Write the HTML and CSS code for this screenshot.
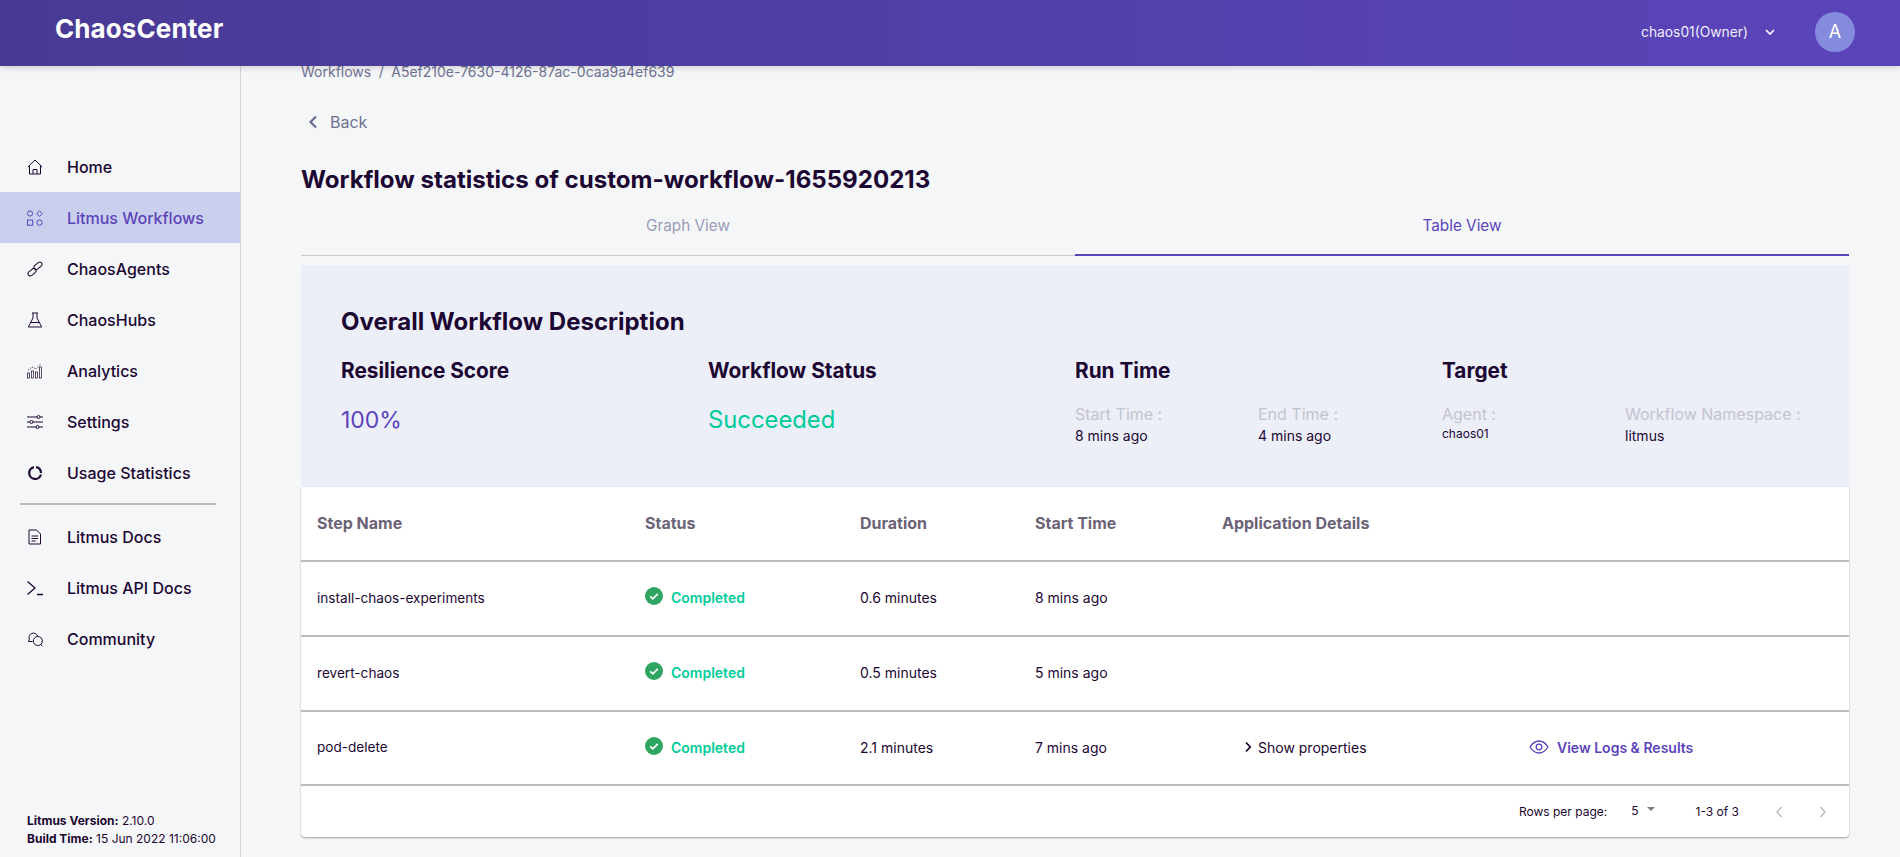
FILE: index.html
```html
<!DOCTYPE html>
<html lang="en">
<head>
    <meta charset="UTF-8">
    <title>ChaosCenter</title>
    <link rel="stylesheet" href="styles.css">
</head>
<body>
    <header class="topbar">
        <div class="brand">ChaosCenter</div>
        <div class="account">
            <span class="account-name">chaos01(Owner)</span>
            <svg class="account-caret" width="12" height="8" viewBox="0 0 12 8"><path d="M2 2l4 4 4-4" fill="none" stroke="#fff" stroke-width="1.6"/></svg>
            <div class="avatar">A</div>
        </div>
    </header>

    <div class="layout">
        <aside class="sidebar">
            <nav class="nav">
                <a class="nav-item">
                    <svg class="nav-icon" viewBox="0 0 16 16"><path d="M0.800 8L8 1l7.200 7M2.500 6.500V15h11V6.500M6 15v-4.500h4V15"/></svg>
                    Home
                </a>
                <a class="nav-item active">
                    <svg class="nav-icon" viewBox="0 0 16 16"><circle cx="3" cy="3.500" r="2.600"/><path d="M12.500 0.800l2.800 2.800-2.800 2.800-2.800-2.800z"/><rect x="0.500" y="10" width="5.200" height="5.200"/><circle cx="12.500" cy="12.600" r="2.700"/></svg>
                    Litmus Workflows
                </a>
                <a class="nav-item">
                    <svg class="nav-icon" viewBox="0 0 16 16"><rect x="6.500" y="2.500" width="9" height="4.600" rx="2.300" transform="rotate(-40 11 4.800)"/><rect x="0.500" y="8.900" width="9" height="4.600" rx="2.300" transform="rotate(-40 5 11.200)"/></svg>
                    ChaosAgents
                </a>
                <a class="nav-item">
                    <svg class="nav-icon" viewBox="0 0 16 16"><path d="M5 1h6M6 1v5L1.300 15h13.400L10 6V1M4 10.500h8M6.500 12.500h.1M9 9.500h.1"/></svg>
                    ChaosHubs
                </a>
                <a class="nav-item">
                    <svg class="nav-icon icon-thin" viewBox="0 0 16 16"><rect x="0.500" y="10" width="2" height="5"/><rect x="4.500" y="8" width="2" height="7"/><rect x="8.500" y="9" width="2" height="6"/><rect x="12.500" y="4" width="2" height="11"/><path d="M1 7l4-3 4 2 4.500-5" stroke-dasharray="1.500 1"/></svg>
                    Analytics
                </a>
                <a class="nav-item">
                    <svg class="nav-icon" viewBox="0 0 16 16"><path d="M0 3h10M13 3h3M0 8h3M6 8h10M0 13h9M12 13h4"/><circle cx="11.500" cy="3" r="1.500"/><circle cx="4.500" cy="8" r="1.500"/><circle cx="10.500" cy="13" r="1.500"/></svg>
                    Settings
                </a>
                <a class="nav-item">
                    <svg class="nav-icon nav-icon-thick" viewBox="0 0 16 16"><path d="M9 2.200A6 6 0 0 1 14 8M14 9.500A6 6 0 1 1 7 2.100"/></svg>
                    Usage Statistics
                </a>
                <div class="nav-divider"></div>
                <a class="nav-item">
                    <svg class="nav-icon" viewBox="0 0 16 16"><path d="M2 1h7.500L13.500 5v10H2zM4.500 7h6.500M4.500 9.500h6.500M4.500 12h4"/></svg>
                    Litmus Docs
                </a>
                <a class="nav-item">
                    <svg class="nav-icon icon-heavy" viewBox="0 0 16 16"><path d="M0.500 1.500L8 8l-7.500 6.500M10 14.500h6"/></svg>
                    Litmus API Docs
                </a>
                <a class="nav-item">
                    <svg class="nav-icon" viewBox="0 0 16 16"><path d="M5.500 10.500H1.500l.8-2.500A4.200 4.200 0 1 1 10.500 5"/><circle cx="10.800" cy="10" r="4.500"/><path d="M13.500 13.500l2 1.500"/></svg>
                    Community
                </a>
            </nav>
            <div class="version">
                <div><b>Litmus Version:</b> 2.10.0</div>
                <div><b>Build Time:</b> 15 Jun 2022 11:06:00</div>
            </div>
        </aside>

        <main class="content">
            <div class="breadcrumb">Workflows<span class="crumb-sep">/</span>A5ef210e-7630-4126-87ac-0caa9a4ef639</div>
            <div class="back">
                <svg width="11" height="16" viewBox="0 0 11 16"><path d="M9 2.500L3.500 8 9 13.500" fill="none" stroke="#6b7094" stroke-width="2.200"/></svg>
                Back
            </div>
            <h1 class="title">Workflow statistics of custom-workflow-1655920213</h1>

            <div class="tabs">
                <div class="tab">Graph View</div>
                <div class="tab selected">Table View</div>
            </div>

            <section class="overview">
                <h2 class="overview-title">Overall Workflow Description</h2>
                <div class="overview-grid">
                    <div class="overview-col">
                        <h3>Resilience Score</h3>
                        <div class="big-value score">100%</div>
                    </div>
                    <div class="overview-col">
                        <h3>Workflow Status</h3>
                        <div class="big-value success">Succeeded</div>
                    </div>
                    <div class="overview-col">
                        <h3>Run Time</h3>
                        <div class="pairs">
                            <div><div class="pair-label">Start Time :</div><div class="pair-value">8 mins ago</div></div>
                            <div><div class="pair-label">End Time :</div><div class="pair-value">4 mins ago</div></div>
                        </div>
                    </div>
                    <div class="overview-col">
                        <h3>Target</h3>
                        <div class="pairs">
                            <div><div class="pair-label">Agent :</div><div class="pair-value small">chaos01</div></div>
                            <div><div class="pair-label">Workflow Namespace :</div><div class="pair-value">litmus</div></div>
                        </div>
                    </div>
                </div>
            </section>

            <section class="table-card">
                <div class="row head">
                    <div>Step Name</div>
                    <div>Status</div>
                    <div>Duration</div>
                    <div>Start Time</div>
                    <div>Application Details</div>
                    <div></div>
                </div>
                <div class="row">
                    <div class="step">install-chaos-experiments</div>
                    <div class="status">
                        <svg width="18" height="18" viewBox="0 0 18 18"><circle cx="9" cy="9" r="9" fill="#2ea561"/><path d="M5.200 9.300l2.600 2.500 5-5" fill="none" stroke="#fff" stroke-width="1.800"/></svg>
                        Completed
                    </div>
                    <div>0.6 minutes</div>
                    <div>8 mins ago</div>
                    <div></div>
                    <div></div>
                </div>
                <div class="row">
                    <div class="step">revert-chaos</div>
                    <div class="status">
                        <svg width="18" height="18" viewBox="0 0 18 18"><circle cx="9" cy="9" r="9" fill="#2ea561"/><path d="M5.200 9.300l2.600 2.500 5-5" fill="none" stroke="#fff" stroke-width="1.800"/></svg>
                        Completed
                    </div>
                    <div>0.5 minutes</div>
                    <div>5 mins ago</div>
                    <div></div>
                    <div></div>
                </div>
                <div class="row last">
                    <div class="step">pod-delete</div>
                    <div class="status">
                        <svg width="18" height="18" viewBox="0 0 18 18"><circle cx="9" cy="9" r="9" fill="#2ea561"/><path d="M5.200 9.300l2.600 2.500 5-5" fill="none" stroke="#fff" stroke-width="1.800"/></svg>
                        Completed
                    </div>
                    <div>2.1 minutes</div>
                    <div>7 mins ago</div>
                    <div class="props">
                        <svg width="8" height="12" viewBox="0 0 8 12"><path d="M2 1.500L6.200 6 2 10.500" fill="none" stroke="#1c0732" stroke-width="1.800"/></svg>
                        Show properties
                    </div>
                    <div class="logs">
                        <svg width="20" height="14" viewBox="0 0 20 14"><path d="M1 7c2.400-3.800 5.400-6 9-6s6.600 2.200 9 6c-2.400 3.800-5.400 6-9 6s-6.600-2.200-9-6z" fill="none" stroke="#5b44ba" stroke-width="1.300"/><circle cx="10" cy="7" r="2.800" fill="none" stroke="#5b44ba" stroke-width="1.300"/></svg>
                        View Logs &amp; Results
                    </div>
                </div>
                <div class="pager">
                    <span class="pager-label">Rows per page:</span>
                    <span class="pager-size">5<i class="pager-caret"></i></span>
                    <span class="pager-count">1-3 of 3</span>
                    <svg width="10" height="14" viewBox="0 0 10 14"><path d="M7.500 2L3 7l4.500 5" fill="none" stroke="#b5b5b9" stroke-width="1.300"/></svg>
                    <svg class="pager-next" width="10" height="14" viewBox="0 0 10 14"><path d="M2.500 2L7 7l-4.500 5" fill="none" stroke="#b5b5b9" stroke-width="1.300"/></svg>
                </div>
            </section>
        </main>
    </div>
</body>
</html>
```

FILE: styles.css
```css
* {
    box-sizing: border-box;
}

html, body {
    height: 100%;
}

body {
    margin: 0;
    font-family: Inter, "Liberation Sans", sans-serif;
    color: #1c0732;
    background-color: #f5f6f8;
    overflow: hidden;
}

.topbar {
    position: relative;
    z-index: 2;
    height: 66px;
    display: flex;
    align-items: center;
    justify-content: space-between;
    padding: 0 45px 0 55px;
    background: linear-gradient(90deg, #483a94, #5b44ba);
    box-shadow: 0 2px 6px rgba(0, 0, 0, 0.15);
}

.brand {
    font-size: 26px;
    font-weight: 700;
    letter-spacing: 0.1px;
    color: #fff;
    margin-top: -10px;
}

.account {
    display: flex;
    align-items: center;
    margin-top: -3px;
}

.account-name {
    font-size: 13.8px;
    color: #f0eefb;
}

.account-caret {
    margin-left: 16px;
}

.avatar {
    width: 40px;
    height: 40px;
    margin-left: 39px;
    border-radius: 50%;
    background-color: #858cdd;
    color: #fff;
    font-size: 18px;
    display: flex;
    align-items: center;
    justify-content: center;
}

.layout {
    display: flex;
    height: 791px;
}

/* Sidebar */
.sidebar {
    width: 241px;
    flex-shrink: 0;
    border-right: 1px solid #d4d5d9;
    display: flex;
    flex-direction: column;
    justify-content: space-between;
    padding: 75px 0 9px;
}

.nav-item {
    height: 51px;
    display: flex;
    align-items: center;
    padding-left: 27px;
    font-size: 16px;
    font-weight: 500;
    color: #1c0732;
}

.nav-item.active {
    background-color: #cbcfee;
    color: #5b44ba;
}

.nav-icon {
    width: 16px;
    height: 16px;
    margin-right: 24px;
    flex-shrink: 0;
    fill: none;
    stroke: #1c0732;
    stroke-width: 1;
}

.nav-icon-thick {
    stroke-width: 2.200;
}

.icon-thin {
    stroke-width: 0.700;
}

.icon-heavy {
    stroke-width: 1.300;
}

.active .nav-icon {
    stroke: #5b44ba;
}

.nav-divider {
    height: 2px;
    margin: 5px 24px 6px 20px;
    background-color: #b9b9bc;
}

.version {
    padding-left: 27px;
    font-size: 12px;
    line-height: 18px;
}

/* Main */
.content {
    flex: 1;
    padding: 0 51px 0 60px;
    min-width: 0;
}

.breadcrumb {
    font-size: 14px;
    line-height: 18px;
    margin-top: -3px;
    color: #6e7191;
}

.crumb-sep {
    margin: 0 7.500px;
}

.back {
    display: flex;
    align-items: center;
    gap: 12px;
    margin: 31px 0 0 6px;
    font-size: 16px;
    line-height: 20px;
    color: #6e7191;
}

.title {
    margin: 32px 0 0;
    font-size: 24.100px;
    line-height: 32px;
    font-weight: 700;
}

.tabs {
    display: flex;
    margin-top: 3px;
}

.tab {
    flex: 1;
    height: 57px;
    padding-top: 17px;
    text-align: center;
    font-size: 15.300px;
    color: #9a9cb5;
    border-bottom: 1px solid #c9c9cc;
}

.tab.selected {
    color: #5b44ba;
    border-bottom: 2px solid #5b44ba;
}

.overview {
    height: 222px;
    margin-top: 9px;
    padding: 42px 40px 0;
    background-color: #eceef8;
}

.overview-title {
    margin: 0;
    font-size: 24px;
    line-height: 30px;
    font-weight: 700;
}

.overview-grid {
    display: grid;
    grid-template-columns: repeat(4, 367px);
    margin-top: 21px;
}

.overview-col h3 {
    margin: 0;
    font-size: 20.800px;
    line-height: 26px;
    font-weight: 700;
}

.big-value {
    margin-top: 21px;
    font-size: 23px;
    line-height: 30px;
}

.score {
    color: #5b44ba;
}

.success {
    font-size: 23.800px;
    color: #00cc9a;
}

.pairs {
    display: grid;
    grid-template-columns: 183px 1fr;
    margin-top: 20px;
}

.pair-label {
    font-size: 16px;
    line-height: 20px;
    color: #c4c4cf;
}

.pair-value {
    font-size: 14px;
    line-height: 20px;
    margin-top: 2px;
}

.pair-value.small {
    font-size: 12px;
    line-height: 16px;
}

/* Table */
.table-card {
    background-color: #fff;
    border-radius: 0 0 4px 4px;
    box-shadow: 0 1px 2px rgba(0, 0, 0, 0.35);
}

.row {
    display: grid;
    grid-template-columns: 328px 215px 175px 187px 307px 1fr;
    align-items: center;
    height: 75px;
    padding: 0 0 2px 16px;
    font-size: 14px;
    border-bottom: 2px solid #bcbcbf;
}

.row.head {
    height: 75px;
    font-size: 16px;
    font-weight: 700;
    color: #6c6377;
}

.step {
    font-size: 13.600px;
}

.status {
    display: flex;
    align-items: center;
    gap: 8px;
    font-weight: 600;
    color: #00cc9a;
}

.status svg {
    margin-top: -3px;
}

.props {
    display: flex;
    align-items: center;
    gap: 6px;
    padding-left: 22px;
}

.logs {
    display: flex;
    align-items: center;
    gap: 8px;
    font-weight: 600;
    color: #5b44ba;
}

.row.last {
    height: 74px;
    border-bottom-width: 2px;
}

.pager {
    height: 51px;
    display: flex;
    align-items: center;
    justify-content: flex-end;
    padding-right: 21px;
    font-size: 12px;
}

.pager-size {
    display: flex;
    align-items: center;
    margin-left: 24px;
    margin-top: -2px;
}

.pager-caret {
    width: 0;
    height: 0;
    margin-left: 8px;
    margin-top: -3px;
    border-left: 4px solid transparent;
    border-right: 4px solid transparent;
    border-top: 4px solid #7d7d80;
}

.pager-count {
    margin: 0 35px 0 41px;
}

.pager-next {
    margin-left: 34px;
}
```
